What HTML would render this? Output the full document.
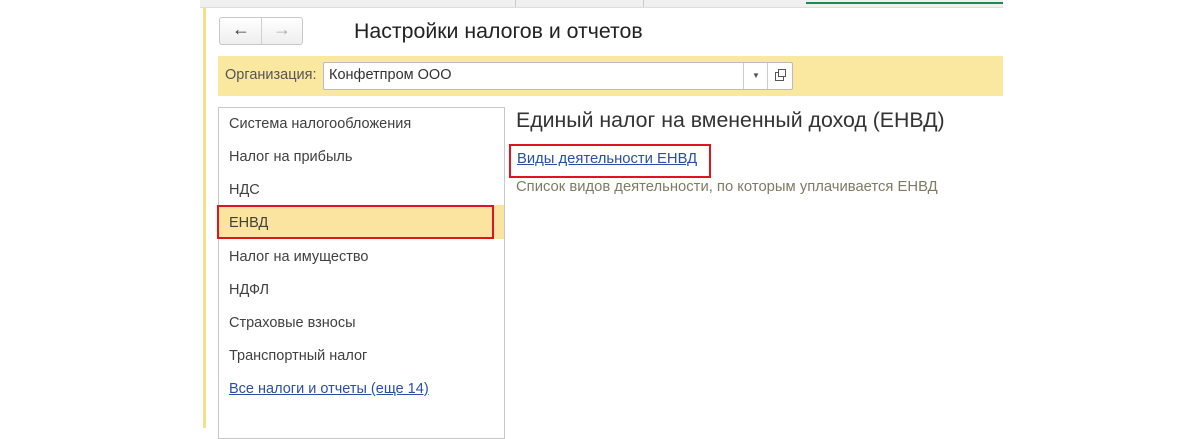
<!DOCTYPE html>
<html><head><meta charset="utf-8"><style>
body{margin:0;width:1200px;height:428px;background:#fff;position:relative;overflow:hidden;font-family:"Liberation Sans","DejaVu Sans",sans-serif;color:#333}
.a{position:absolute}
.it{position:absolute;left:229px;font-size:14.5px;color:#404040}
</style></head><body>
<div class="a" style="left:200px;top:0;width:803px;height:7px;background:#f0f0f0;border-bottom:1px solid #ddd"></div>
<div class="a" style="left:515px;top:0;width:1px;height:7px;background:#ccc"></div>
<div class="a" style="left:643px;top:0;width:1px;height:7px;background:#ccc"></div>
<div class="a" style="left:806px;top:2px;width:197px;height:2px;background:#1f8a4c"></div>
<div class="a" style="left:203px;top:8px;width:3px;height:420px;background:#f5e08a"></div>
<div class="a" style="left:219px;top:17px;width:82px;height:26px;border:1px solid #c8c8c8;border-radius:3px;background:linear-gradient(#fff,#eee)"></div>
<div class="a" style="left:261px;top:18px;width:1px;height:26px;background:#d0d0d0"></div>
<div class="a" style="left:232px;top:19px;font-size:18px;color:#333;font-weight:bold">&#8592;</div>
<div class="a" style="left:273px;top:19px;font-size:18px;color:#aaa;font-weight:bold">&#8594;</div>
<div class="a" style="left:354px;top:19px;font-size:21.3px;color:#222">Настройки налогов и отчетов</div>
<div class="a" style="left:218px;top:56px;width:785px;height:40px;background:#fbe8a0"></div>
<div class="a" style="left:225px;top:67px;font-size:14.5px;color:#555">Организация:</div>
<div class="a" style="left:323px;top:62px;width:468px;height:26px;border:1px solid #bbb;border-radius:2px;background:#fff"></div>
<div class="a" style="left:329px;top:67px;font-size:14.5px;color:#333">Конфетпром ООО</div>
<div class="a" style="left:743px;top:63px;width:1px;height:26px;background:#ccc"></div>
<div class="a" style="left:767px;top:63px;width:1px;height:26px;background:#ccc"></div>
<div class="a" style="left:752px;top:71px;font-size:8px;color:#555">&#9660;</div>
<div class="a" style="left:775px;top:72px;width:7px;height:7px;border:1px solid #555"></div>
<div class="a" style="left:778px;top:69px;width:6px;height:6px;border:1px solid #555;background:#fff"></div>
<div class="a" style="left:218px;top:107px;width:285px;height:330px;border:1px solid #c8c8c8;background:#fff"></div>
<div class="a" style="left:219px;top:205px;width:285px;height:34px;background:#fbe3a0"></div>
<div class="a" style="left:217px;top:205px;width:273px;height:30px;border:2px solid #e0141e"></div>
<div class="it" style="top:116px">Система налогообложения</div>
<div class="it" style="top:149px">Налог на прибыль</div>
<div class="it" style="top:182px">НДС</div>
<div class="it" style="top:215px">ЕНВД</div>
<div class="it" style="top:249px">Налог на имущество</div>
<div class="it" style="top:282px">НДФЛ</div>
<div class="it" style="top:315px">Страховые взносы</div>
<div class="it" style="top:348px">Транспортный налог</div>
<div class="it" style="top:381px;color:#2a4fa8;text-decoration:underline">Все налоги и отчеты (еще 14)</div>
<div class="a" style="left:516px;top:108px;font-size:21.3px;color:#333">Единый налог на вмененный доход (ЕНВД)</div>
<div class="a" style="left:509px;top:144px;width:198px;height:30px;border:2px solid #e0141e"></div>
<div class="a" style="left:517px;top:151px;font-size:14.8px;color:#2a4fa8;text-decoration:underline">Виды деятельности ЕНВД</div>
<div class="a" style="left:516px;top:179px;font-size:14.8px;color:#7c7c64">Список видов деятельности, по которым уплачивается ЕНВД</div>
</body></html>
